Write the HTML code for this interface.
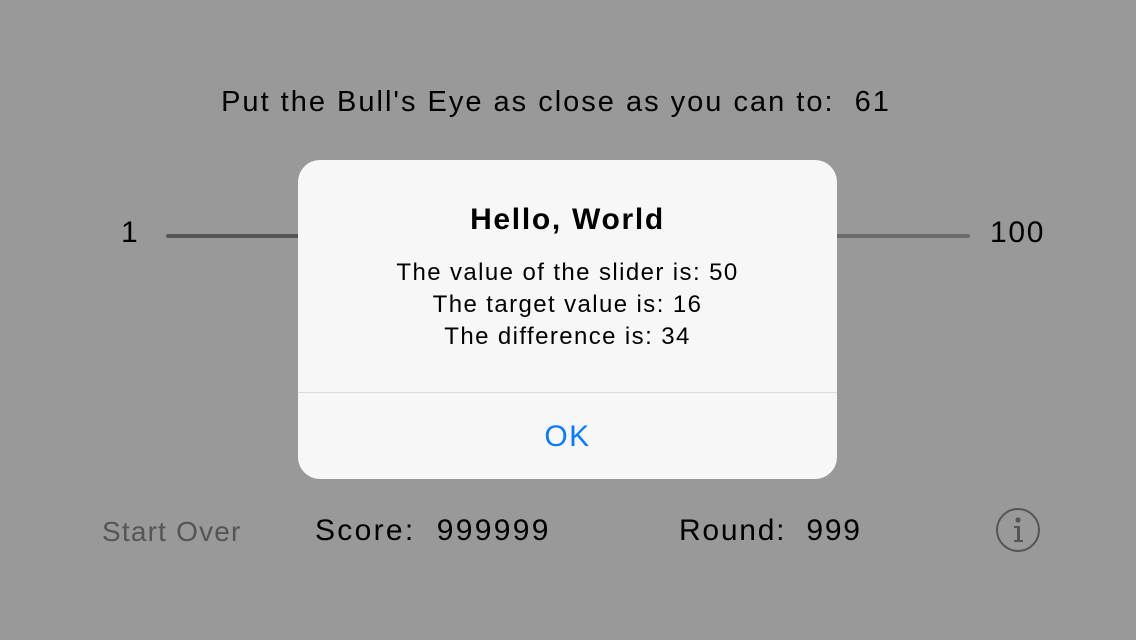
<!DOCTYPE html>
<html><head><style>
body{margin:0;width:1136px;height:640px;background:#999;position:relative;overflow:hidden;font-family:"Liberation Sans",sans-serif;color:#000}
.t{position:absolute;white-space:nowrap}
.line{position:absolute;height:4px;border-radius:2px}
.dlg{position:absolute;left:298px;top:160px;width:539px;height:319px;background:#f7f7f7;border-radius:22px;text-align:center}
</style></head><body>
<div class="t" style="left:0;width:1112px;text-align:center;top:86px;font-size:29px;letter-spacing:2px">Put the Bull's Eye as close as you can to:&nbsp; 61</div>
<div class="t" style="left:121px;top:216px;font-size:30px">1</div>
<div class="line" style="left:166px;top:234px;width:140px;background:#555"></div>
<div class="line" style="left:830px;top:234px;width:140px;background:#6a6a6a"></div>
<div class="t" style="left:990px;top:216px;font-size:30px;letter-spacing:1.7px">100</div>
<div class="t" style="left:102px;top:516px;font-size:28px;color:#555;letter-spacing:1.2px">Start Over</div>
<div class="t" style="left:315px;top:514px;font-size:30px;letter-spacing:2.3px">Score:&nbsp; 999999</div>
<div class="t" style="left:679px;top:514px;font-size:30px;letter-spacing:1.75px">Round:&nbsp; 999</div>
<svg style="position:absolute;left:995px;top:508px" width="46" height="46"><circle cx="23" cy="22" r="21" fill="none" stroke="#555" stroke-width="2"/><circle cx="23" cy="12" r="2.6" fill="#555"/><path d="M19 18h6v14h3v2h-9v-2h3v-12h-3z" fill="#555"/></svg>
<div class="dlg">
<div style="position:absolute;top:43px;width:100%;font-size:30px;font-weight:bold;letter-spacing:1.7px">Hello, World</div>
<div style="position:absolute;top:97px;width:100%;font-size:24px;line-height:32px;letter-spacing:1.4px">The value of the slider is: 50<br>The target value is: 16<br>The difference is: 34</div>
<div style="position:absolute;top:232px;width:100%;height:1px;background:#dcdcdc"></div>
<div style="position:absolute;top:260px;width:100%;font-size:30px;color:#0a7aff;letter-spacing:1.5px">OK</div>
</div>
</body></html>
